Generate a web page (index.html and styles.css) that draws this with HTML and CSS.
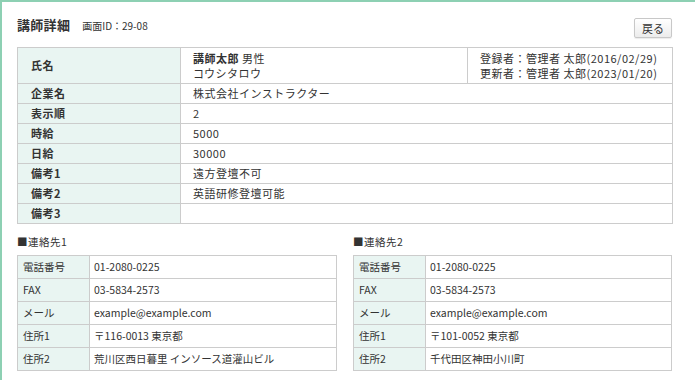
FILE: index.html
```html
<!DOCTYPE html>
<html lang="ja">
<head>
<meta charset="utf-8">
<title>講師詳細</title>
<link rel="stylesheet" href="styles.css">
</head>
<body>
<div class="page">
  <div class="header">
    <div class="title-group">
      <h1 class="title">講師詳細</h1>
      <span class="screen-id">画面ID：29-08</span>
    </div>
    <button class="back-btn" type="button">戻る</button>
  </div>

  <table class="detail">
    <colgroup>
      <col class="col-label">
      <col class="col-name">
      <col class="col-meta">
    </colgroup>
    <tr class="row-tall">
      <th>氏名</th>
      <td><span class="strong">講師太郎</span> 男性<br>コウシタロウ</td>
      <td>登録者：管理者 太郎(2016/02/29)<br>更新者：管理者 太郎(2023/01/20)</td>
    </tr>
    <tr><th>企業名</th><td colspan="2">株式会社インストラクター</td></tr>
    <tr><th>表示順</th><td colspan="2">2</td></tr>
    <tr><th>時給</th><td colspan="2">5000</td></tr>
    <tr><th>日給</th><td colspan="2">30000</td></tr>
    <tr><th>備考1</th><td colspan="2">遠方登壇不可</td></tr>
    <tr><th>備考2</th><td colspan="2">英語研修登壇可能</td></tr>
    <tr><th>備考3</th><td colspan="2"></td></tr>
  </table>

  <div class="contacts">
    <section class="contact">
      <h2 class="contact-title">■連絡先1</h2>
      <table class="contact-table">
        <tr><th>電話番号</th><td>01-2080-0225</td></tr>
        <tr><th>FAX</th><td>03-5834-2573</td></tr>
        <tr><th>メール</th><td>example@example.com</td></tr>
        <tr><th>住所1</th><td>〒116-0013 東京都</td></tr>
        <tr><th>住所2</th><td>荒川区西日暮里 インソース道灌山ビル</td></tr>
      </table>
    </section>
    <section class="contact">
      <h2 class="contact-title">■連絡先2</h2>
      <table class="contact-table">
        <tr><th>電話番号</th><td>01-2080-0225</td></tr>
        <tr><th>FAX</th><td>03-5834-2573</td></tr>
        <tr><th>メール</th><td>example@example.com</td></tr>
        <tr><th>住所1</th><td>〒101-0052 東京都</td></tr>
        <tr><th>住所2</th><td>千代田区神田小川町</td></tr>
      </table>
    </section>
  </div>
</div>
</body>
</html>
```

FILE: styles.css
```css
* {
  box-sizing: border-box;
}

html, body {
  margin: 0;
  padding: 0;
  background: #fff;
}

body {
  font-family: "Noto Sans CJK JP", "Noto Sans", sans-serif;
  color: #333;
  font-size: 11px;
}

.page {
  height: 380px;
  border-top: 2px solid #8dd0b3;
  border-left: 2px solid #8dd0b3;
  padding: 0 23px 0 15px;
  overflow: hidden;
}

/* header: title, screen id, back button */
.header {
  display: flex;
  justify-content: space-between;
  align-items: flex-start;
  height: 45px;
}

.title-group {
  margin-top: 14px;
  display: flex;
  align-items: baseline;
  gap: 12px;
  line-height: 18px;
}

.title {
  margin: 0;
  font-size: 13px;
  font-weight: bold;
  letter-spacing: 0.3px;
  color: #333;
}

.screen-id {
  font-size: 10px;
  color: #333;
}

.back-btn {
  margin-top: 16px;
  width: 38px;
  height: 20px;
  padding: 0;
  font-family: inherit;
  font-size: 11px;
  color: #333;
  background: linear-gradient(#ffffff, #ececec);
  border: 1px solid #c8c8c8;
  border-radius: 2px;
  box-shadow: 0 1px 1px rgba(0, 0, 0, 0.08);
}

/* main detail table */
.detail {
  width: 655px;
  border-collapse: collapse;
  table-layout: fixed;
}

.col-label { width: 163px; }
.col-name { width: 287px; }
.col-meta { width: 205px; }

.detail th,
.detail td {
  border: 1px solid #cccccc;
  height: 20px;
  padding: 0 12px;
  text-align: left;
  vertical-align: middle;
  line-height: 15px;
  letter-spacing: 0.5px;
}

.detail th {
  background: #e9f5f2;
  font-weight: bold;
  padding-left: 13px;
}

.detail .row-tall th,
.detail .row-tall td {
  height: 36px;
}

.strong {
  font-weight: bold;
}

/* contact blocks */
.contacts {
  display: grid;
  grid-template-columns: 320px 319px;
  gap: 16px;
  margin-top: 11px;
}

.contact-title {
  margin: 0 0 6px;
  font-size: 10.5px;
  font-weight: normal;
  line-height: 14px;
  letter-spacing: 0.5px;
}

.contact-table {
  width: 100%;
  border-collapse: collapse;
  table-layout: fixed;
}

.contact-table th,
.contact-table td {
  border: 1px solid #cccccc;
  height: 23px;
  padding: 0 4px;
  text-align: left;
  vertical-align: middle;
  font-size: 10.5px;
  font-weight: normal;
  line-height: 14px;
}

.contact-table th {
  width: 72px;
  background: #e9f5f2;
  padding-left: 5px;
}
```
